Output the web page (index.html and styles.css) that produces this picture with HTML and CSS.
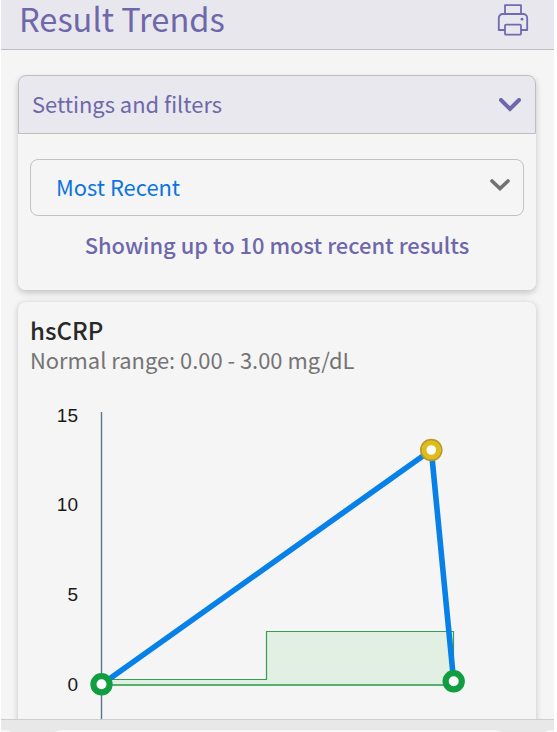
FILE: index.html
```
<!DOCTYPE html>
<html lang="en">
<head>
    <meta charset="UTF-8">
    <title>Result Trends</title>
    <link rel="stylesheet" href="styles.css">
</head>
<body>
<div class="screen">
    <header class="page-header">
        <h1>Result Trends</h1>
        <svg class="print-icon" viewBox="0 0 32 32" width="32" height="32">
            <path d="M8 10V1.2h16V10" />
            <path d="M8 26H1.8V14a4 4 0 0 1 4-4h20.4a4 4 0 0 1 4 4v12H24" />
            <rect x="8" y="20.7" width="16" height="10" rx="1" />
            <circle cx="25" cy="15.2" r="1.4" />
        </svg>
    </header>

    <main class="content">
        <section class="settings">
            <div class="settings-header">
                <span>Settings and filters</span>
                <svg viewBox="0 0 22 14" width="22" height="14">
                    <path d="M2 2l9 9 9-9" />
                </svg>
            </div>
            <div class="settings-body">
                <div class="select">
                    <span>Most Recent</span>
                    <svg viewBox="0 0 20 12" width="20" height="12">
                        <path d="M2 2l8 7.6L18 2" />
                    </svg>
                </div>
                <p class="showing">Showing up to 10 most recent results</p>
            </div>
        </section>

        <section class="result">
            <h2>hsCRP</h2>
            <p class="range">Normal range: 0.00 - 3.00 mg/dL</p>
            <svg class="chart" viewBox="18 390 518 329" width="518" height="329">
                <g class="labels">
                    <text x="78" y="421.5">15</text>
                    <text x="78" y="511">10</text>
                    <text x="78" y="600.5">5</text>
                    <text x="78" y="690.5">0</text>
                </g>
                <path class="axis" d="M101.5 412V719" />
                <path class="normal-fill" d="M101.5 679.5H266.5V631.5H453.5V685H101.5Z" />
                <path class="normal-line" d="M101.5 679.5H266.5V631.5H453.5V685" />
                <path class="normal-base" d="M101.5 685H453.5" />
                <path class="trend" d="M101.5 684.5L431.3 450L453.7 681.5" />
                <circle class="point" cx="101.5" cy="684.3" r="8.1" />
                <circle class="point-high-edge" cx="431.3" cy="450" r="10.3" />
                <circle class="point high" cx="431.3" cy="450" r="7.2" />
                <circle class="point" cx="453.7" cy="681.3" r="8.1" />
            </svg>
        </section>
    </main>

    <footer class="browser-bar">
        <div class="tab previous"></div>
        <div class="tab address"></div>
        <div class="tab next"></div>
    </footer>
</div>
</body>
</html>
```

FILE: styles.css
```
* {
    box-sizing: border-box;
}

body {
    margin: 0;
    background: #fff;
    color: #292929;
    font-family: "Noto Sans CJK SC", sans-serif;
    overflow: hidden;
}

h1,
h2,
p {
    margin: 0;
}

svg {
    display: block;
    fill: none;
}

.screen {
    width: 553px;
    height: 732px;
    margin-left: 1px;
    background: #f5f5f5;
    display: flex;
    flex-direction: column;
    overflow: hidden;
}

.page-header {
    flex: none;
    height: 50px;
    padding: 0 25px 0 18px;
    display: flex;
    align-items: flex-start;
    justify-content: space-between;
    background: #e8e7ed;
    border-bottom: 1px solid #bfbec3;
    color: #6e68aa;
}

h1 {
    font-size: 32.6px;
    font-weight: 400;
    line-height: 36px;
}

.print-icon {
    margin-top: 4px;
    stroke: #7069b4;
    stroke-width: 1.8;
    stroke-linejoin: round;
}

.print-icon circle {
    fill: #7069b4;
    stroke: none;
}

.content {
    flex: 1;
    min-height: 0;
    padding: 25px 17px 0;
    display: flex;
    flex-direction: column;
    gap: 12px;
    overflow: hidden;
}

.settings {
    flex: none;
    height: 215px;
    width: 518px;
    border-radius: 8px;
    box-shadow: 0 3px 6px rgba(0, 0, 0, .2);
}

.settings-header {
    height: 59px;
    padding: 0 14px 0 13px;
    display: flex;
    align-items: center;
    justify-content: space-between;
    background: #e8e8ee;
    border: 1px solid #bfbfc2;
    border-radius: 8px 8px 0 0;
    color: #6e68aa;
    font-size: 21.9px;
}

.settings-header span,
.select span {
    padding-bottom: 2px;
}

.settings-header svg {
    stroke: #6e68aa;
    stroke-width: 4;
    stroke-linecap: round;
}

.settings-body {
    height: 156px;
    padding: 25px 12px 0;
    background: #f5f5f5;
    border-radius: 0 0 8px 8px;
}

.select {
    height: 57px;
    padding: 0 13px 0 25px;
    display: flex;
    align-items: center;
    justify-content: space-between;
    border: 1px solid #c2c2c2;
    border-radius: 8px;
    color: #0b74e0;
    font-size: 21.9px;
}

.select svg {
    margin-bottom: 5px;
    stroke: #727272;
    stroke-width: 3.6;
    stroke-linecap: round;
}

.showing {
    margin-top: 13px;
    color: #6e68aa;
    font-size: 21.9px;
    font-weight: 500;
    line-height: 32px;
    text-align: center;
    white-space: nowrap;
}

.result {
    flex: none;
    width: 518px;
    height: 440px;
    padding-top: 13px;
    background: #f5f5f5;
    border-radius: 8px;
    box-shadow: 0 1px 6px rgba(0, 0, 0, .2);
}

h2 {
    padding-left: 12px;
    font-size: 24px;
    font-weight: 500;
    line-height: 29px;
}

.range {
    padding-left: 12px;
    color: #747474;
    font-size: 21.9px;
    line-height: 31px;
}

.chart {
    margin-top: 15px;
}

.labels {
    fill: #191919;
    font-family: "Liberation Sans", sans-serif;
    font-size: 19px;
    text-anchor: end;
}

.axis {
    stroke: #58768a;
    stroke-width: 1.4;
}

.normal-fill {
    fill: #e1f0e2;
}

.normal-line {
    stroke: #35a052;
    stroke-width: 1.2;
}

.normal-base {
    stroke: #58b06e;
    stroke-width: 2;
}

.trend {
    stroke: #0780e8;
    stroke-width: 5.6;
    stroke-linejoin: round;
}

.point {
    fill: #fff;
    stroke: #129e40;
    stroke-width: 6.2;
}

.point.high {
    stroke: #dfbd18;
    stroke-width: 4.8;
}

.point-high-edge {
    stroke: #b8992a;
    stroke-width: 2;
}

.browser-bar {
    flex: none;
    height: 13px;
    padding-top: 10px;
    display: flex;
    gap: 30px;
    background: #e8e8e9;
    border-top: 1px solid #cdcdce;
    overflow: hidden;
}

.tab {
    flex: none;
    height: 50px;
    background: #f7f7f7;
}

.previous {
    width: 17px;
    border-radius: 0 14px 0 0;
}

.address {
    width: 460px;
    border-radius: 14px;
}

.next {
    width: 16px;
    border-radius: 14px 0 0 0;
}
```
